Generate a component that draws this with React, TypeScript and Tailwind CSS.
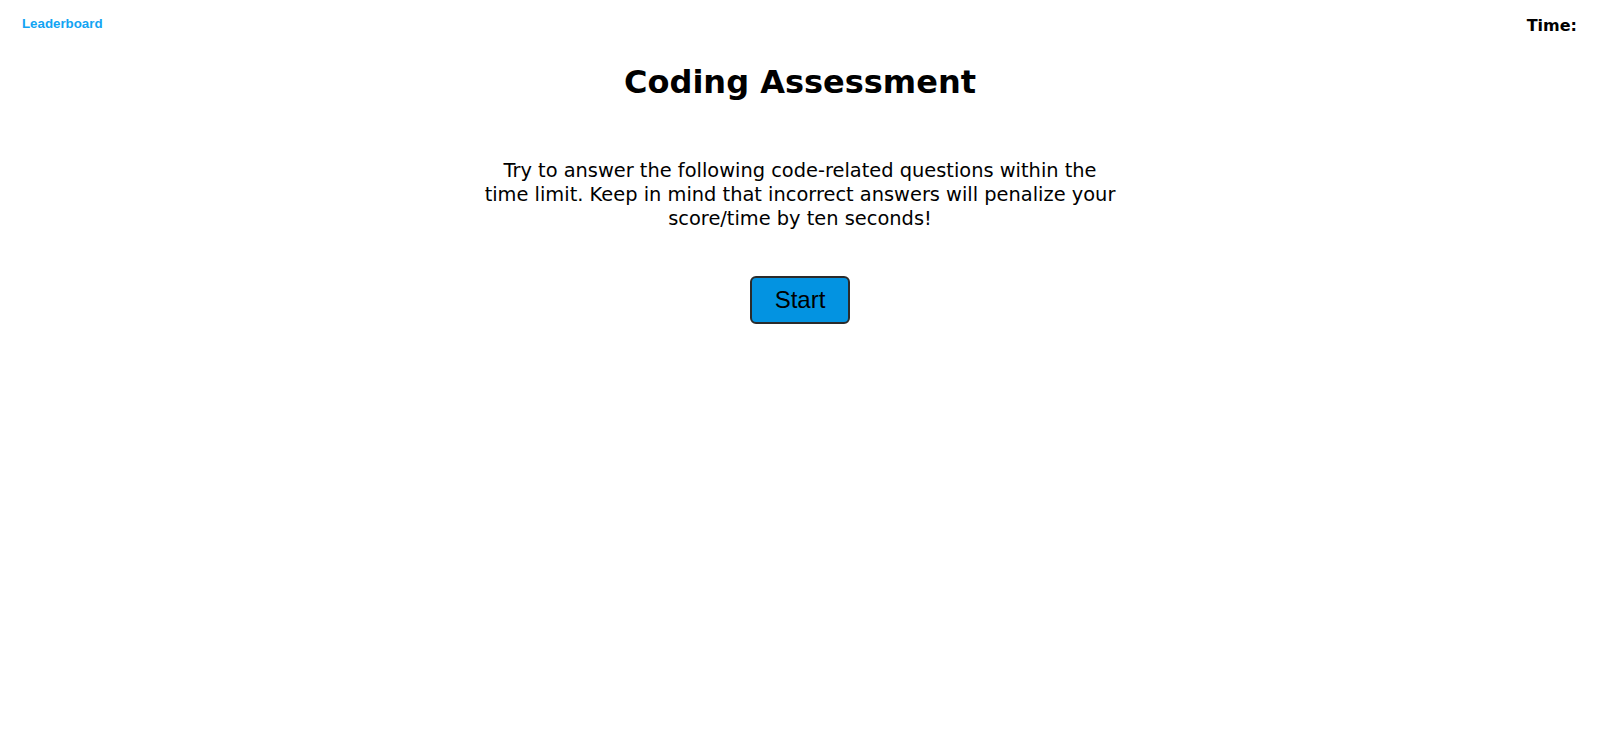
export default function App() {
  return (
    <div className="min-h-[749px] bg-white text-black" style={{ fontFamily: '"DejaVu Sans", Verdana, sans-serif' }}>
      <header className="flex items-start justify-between pl-[22px] pr-[23px] pt-[14px]">
        <a className="text-[13.3px] font-bold text-[#12a4f3]" style={{ fontFamily: '"Liberation Sans", Arial, sans-serif' }} href="#">
          Leaderboard
        </a>
        <div className="text-[16px] font-bold">Time:</div>
      </header>
      <main className="flex flex-col items-center">
        <h1 className="mt-[24px] text-[32px] font-bold leading-[40px]">Coding Assessment</h1>
        <p className="mt-[57px] w-[640px] text-center text-[19.4px] leading-[24px]">
          Try to answer the following code-related questions within the time limit. Keep in mind that incorrect answers will penalize your score/time by ten seconds!
        </p>
        <button
          className="mt-[45px] h-[48px] w-[100px] rounded-[6px] border-2 border-[#2b2b2b] bg-[#0393e1] text-[24px] text-black"
          style={{ fontFamily: '"Liberation Sans", Arial, sans-serif' }}
        >
          Start
        </button>
      </main>
    </div>
  );
}
